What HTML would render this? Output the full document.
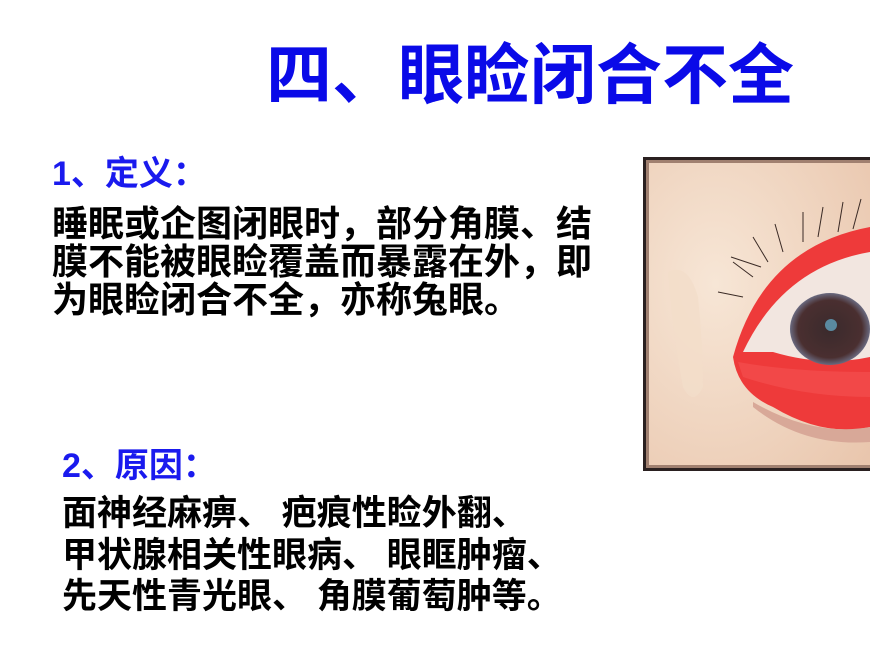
<!DOCTYPE html>
<html><head><meta charset="utf-8"><style>
body{margin:0;width:870px;height:658px;background:#fff;position:relative;overflow:hidden;font-family:"Liberation Sans","Noto Sans CJK SC",sans-serif;font-weight:bold}
.t{position:absolute;white-space:nowrap;line-height:1}
</style></head><body>
<div class="t" style="left:266px;top:42px;font-size:66px;color:#0a0ae8">四、眼睑闭合不全</div>
<div class="t" style="left:52px;top:157px;font-size:34px;color:#1a1aee">1、定义：</div>
<div class="t" style="left:52px;top:205px;font-size:36px;color:#000;line-height:38px">睡眠或企图闭眼时，部分角膜、结<br>膜不能被眼睑覆盖而暴露在外，即<br>为眼睑闭合不全，亦称兔眼。</div>
<div class="t" style="left:62px;top:449px;font-size:34px;color:#1a1aee">2、原因：</div>
<div class="t" style="left:62px;top:496px;font-size:35px;color:#000">面神经麻痹、 疤痕性睑外翻、</div>
<div class="t" style="left:62px;top:538px;font-size:35px;color:#000">甲状腺相关性眼病、 眼眶肿瘤、</div>
<div class="t" style="left:62px;top:579px;font-size:35px;color:#000">先天性青光眼、 角膜葡萄肿等。</div>
<svg style="position:absolute;left:643px;top:157px" width="227" height="314" viewBox="0 0 227 314">
<defs>
<radialGradient id="sk" cx="0.3" cy="0.4" r="0.9"><stop offset="0" stop-color="#f7e6d6"/><stop offset="1" stop-color="#e9c6ad"/></radialGradient>
<radialGradient id="ir" cx="0.5" cy="0.5" r="0.5"><stop offset="0" stop-color="#3a2a2c"/><stop offset="0.8" stop-color="#4a2f30"/><stop offset="1" stop-color="#6a6a80"/></radialGradient>
</defs>
<rect x="0" y="0" width="227" height="314" fill="#2a2020"/>
<rect x="3" y="3" width="224" height="308" fill="#a08070"/>
<rect x="6" y="6" width="221" height="302" fill="url(#sk)"/>
<path d="M25 115 Q45 105 55 140 Q60 190 60 230 Q50 250 40 230 Q30 180 25 115Z" fill="#f3ddc9" opacity="0.8"/>
<path d="M90 200 Q120 90 227 70 L227 270 Q180 280 130 250 Q95 235 90 200Z" fill="#ee3a3a"/>
<path d="M100 195 Q140 110 227 95 L227 200 Q180 210 130 195Z" fill="#f2e6e0"/>
<ellipse cx="187" cy="172" rx="40" ry="36" fill="url(#ir)"/>
<circle cx="188" cy="168" r="6" fill="#5a8aa0"/>
<path d="M95 205 Q150 215 227 215 L227 240 Q160 240 100 220Z" fill="#f24848"/>
<path d="M110 245 Q170 280 227 270 L227 285 Q160 290 110 250Z" fill="#d8a898"/>
<g stroke="#3a2a25" stroke-width="1" fill="none">
<path d="M110 120 l-20 -15 M125 105 l-15 -25 M140 95 l-8 -28 M160 85 l0 -30 M175 80 l5 -30 M195 75 l5 -30 M210 72 l8 -30 M100 140 l-25 -5 M118 110 l-30 -10"/>
</g>
</svg>
</body></html>
